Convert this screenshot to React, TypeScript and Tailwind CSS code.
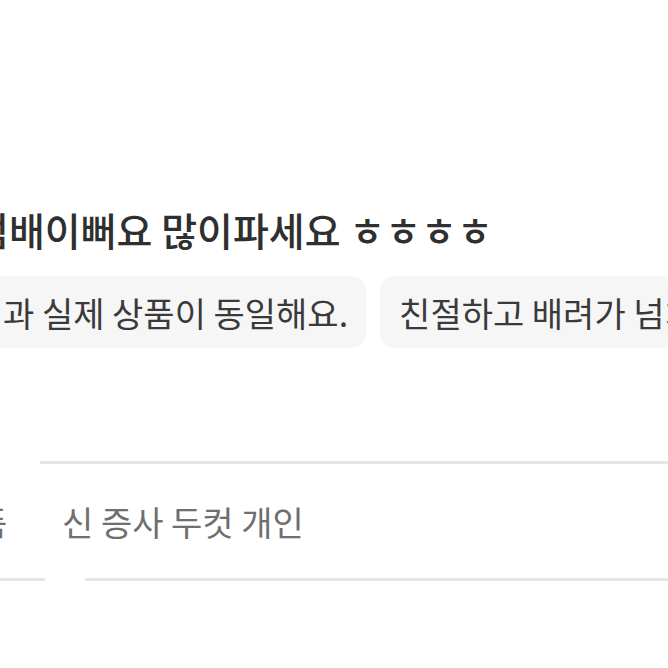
const font = { fontFamily: '"Noto Sans CJK KR", "Noto Sans", sans-serif' }

export default function App() {
  return (
    <div className="w-[668px] h-[668px] overflow-hidden bg-white" style={font}>
      <div className="pt-[210px]">
        <p className="-ml-[27px] whitespace-nowrap text-[39px] leading-[38px] text-[#2f2f2f] font-medium">
          럼배이뻐요 많이파세요 ㅎㅎㅎㅎ
        </p>

        <div className="mt-[28px] flex gap-[14px] -ml-[30px] whitespace-nowrap">
          <div className="h-[72px] flex items-center rounded-[14px] bg-[#f6f6f6] pl-[33px] pr-[18px] text-[34px] text-[#3a3a3a]">
            과 실제 상품이 동일해요.
          </div>
          <div className="h-[72px] flex items-center rounded-[14px] bg-[#f6f6f6] pl-[19px] pr-[18px] text-[34px] text-[#3a3a3a]">
            친절하고 배려가 넘치는 판매자예요.
          </div>
        </div>

        <div className="mt-[113px]">
          <div className="flex">
            <div className="w-[40px]" />
            <div className="flex-1 h-[3px] bg-[#e6e6e6]" />
          </div>
          <div className="h-[114px] flex items-center whitespace-nowrap text-[34px] text-[#6f6f6f]">
            <span className="-ml-[24px] w-[34px]">품</span>
            <span className="ml-[52px]">신 증사 두컷 개인</span>
          </div>
          <div className="flex">
            <div className="w-[45px] h-[3px] bg-[#e6e6e6]" />
            <div className="w-[40px]" />
            <div className="flex-1 h-[3px] bg-[#e6e6e6]" />
          </div>
        </div>
      </div>
    </div>
  )
}
